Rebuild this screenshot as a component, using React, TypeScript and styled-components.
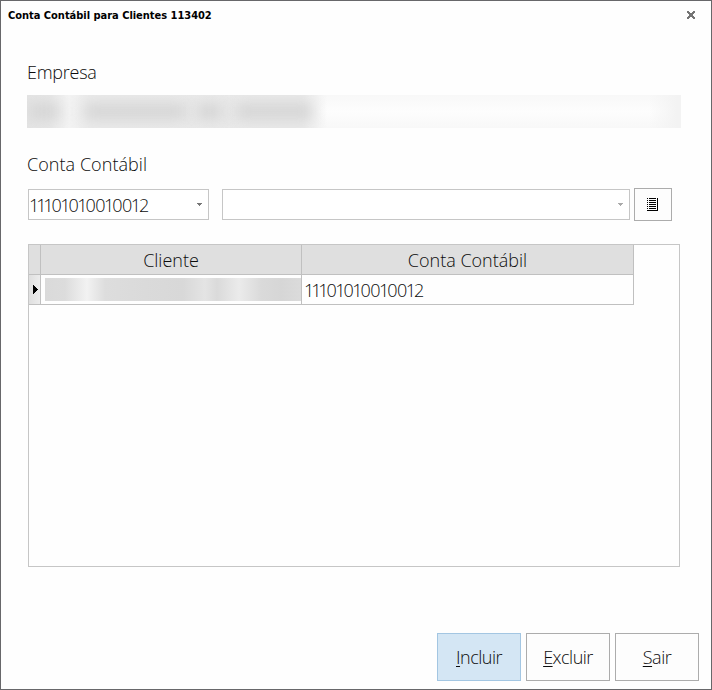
import React from "react";
import styled, { createGlobalStyle } from "styled-components";

const GlobalStyle = createGlobalStyle`
  * { box-sizing: border-box; }
  body { margin: 0; background: #fefefe; }
  button { padding: 0; margin: 0; font: inherit; color: inherit; }
`;

const Dialog = styled.div`
  width: 712px;
  height: 690px;
  border: 1px solid #67676a;
  background: #fefefe;
  color: #0c0c0c;
  font: 300 18px/24px "Open Sans", "Noto Sans", sans-serif;
  display: flex;
  flex-direction: column;
`;

const TitleBar = styled.header`
  display: flex;
  justify-content: space-between;
  align-items: center;
  height: 28px;
  padding: 0 16px 0 7px;
`;

const Title = styled.h1`
  margin: 0;
  padding-top: 2px;
  color: #000;
  font: bold 11px/14px "DejaVu Sans Condensed", "DejaVu Sans", sans-serif;
  font-stretch: condensed;
  letter-spacing: -0.02px;
  white-space: nowrap;
`;

const CloseButton = styled.button`
  display: flex;
  border: 0;
  background: none;
`;

const Form = styled.main`
  display: flex;
  flex-direction: column;
  padding: 31px 30px 0 26px;
`;

const Label = styled.label<{ $spacing?: number }>`
  height: 24px;
  white-space: nowrap;
  letter-spacing: ${(p) => p.$spacing ?? 0}px;
`;

const Redacted = styled.div`
  overflow: hidden;
  display: flex;
  align-items: center;
  flex: none;
`;

const CompanyField = styled(Redacted)`
  width: 654px;
  height: 33px;
  margin: 11px 0 24px;
  background:
    linear-gradient(90deg, transparent 622px, #f3f3f3 650px),
    linear-gradient(90deg, #e4e4e4, #e6e6e6 22px, #f3f3f3 42px, #eaeaea 62px, #e9e9e9 276px, transparent 300px),
    linear-gradient(#f8f8f8, #fdfdfd 50%, #f8f8f8);
`;

const ClientMask = styled(Redacted)`
  width: 256px;
  height: 23px;
  margin: 3px 0 0 4px;
  background: linear-gradient(
    90deg,
    #dadada,
    #dcdcdc 20px,
    #f2f2f2 42px,
    #dddddd 60px,
    #dadada 100px,
    #d8d8d8 138px,
    #e4e4e4 160px,
    #dadada 172px,
    #ebebeb 194px,
    #dadada 216px,
    #d6d6d6 236px,
    #dbdbdb
  );
`;

const Smudge = styled.span<{ $w: number; $gap: number }>`
  width: ${(p) => p.$w}px;
  height: 15px;
  margin-left: ${(p) => p.$gap}px;
  background: #d4d4d4;
  filter: blur(7px);
  flex: none;
`;

const Selectors = styled.div`
  display: flex;
  align-items: center;
  height: 33px;
  margin: 12px 0 23px 1px;
`;

const Combo = styled.div<{ $w: number; $after: number }>`
  display: flex;
  align-items: center;
  justify-content: space-between;
  width: ${(p) => p.$w}px;
  height: 31px;
  margin-right: ${(p) => p.$after}px;
  padding: 0 6px 0 1px;
  border: 1px solid #c6c6c6;
  background: #fff;
`;

const Code = styled.span`
  letter-spacing: -0.5px;
  white-space: nowrap;
`;

const Ones = styled.span`
  position: relative;
  left: -1px;
  letter-spacing: -3.1px;
`;

const ListButton = styled.button`
  display: flex;
  align-items: center;
  justify-content: center;
  width: 38px;
  height: 33px;
  padding-right: 1px;
  border: 1px solid #acacac;
  background: #fdfdfd;
`;

const Grid = styled.section`
  width: 652px;
  height: 323px;
  margin-left: 1px;
  border: 1px solid #c6c6c6;
`;

const GridRow = styled.div<{ $head?: boolean }>`
  display: grid;
  grid-template-columns: 12px 261px 332px;
  width: 605px;
  height: 30px;
  background: ${(p) => (p.$head ? "#dfdfdf" : "#fefefe")};
  text-align: ${(p) => (p.$head ? "center" : "left")};
`;

const Cell = styled.div<{ $pad?: number }>`
  overflow: hidden;
  border-right: 1px solid #c0c0c0;
  border-bottom: 1px solid #c0c0c0;
  padding-left: ${(p) => p.$pad ?? 0}px;
  line-height: 31px;
  white-space: nowrap;
`;

const MarkerCell = styled(Cell)`
  display: flex;
  align-items: center;
  background: linear-gradient(90deg, #dfdfdf, #ececec);
`;

const Actions = styled.footer`
  display: flex;
  justify-content: flex-end;
  gap: 5px;
  margin: auto 12px 8px 0;
`;

const ActionButton = styled.button<{ $primary?: boolean }>`
  width: 84px;
  height: 48px;
  border: 1px solid ${(p) => (p.$primary ? "#a3c6e2" : "#acacac")};
  background: ${(p) => (p.$primary ? "#d4e6f4" : "#fdfdfd")};
  letter-spacing: -0.5px;
`;

const Key = styled.span`
  text-decoration: underline;
  text-decoration-thickness: 1px;
  text-underline-offset: 2px;
`;

const Arrow = ({ color }: { color: string }) => (
  <svg width="5" height="3" viewBox="0 0 5 3" shapeRendering="crispEdges" fill={color}>
    <path d="M0 0H5V1H4V2H3V3H2V2H1V1H0Z" />
  </svg>
);

const CloseIcon = () => (
  <svg width="8" height="8" viewBox="0 0 8 8" shapeRendering="crispEdges" fill="#747474">
    <path d="M0 0H2V1H3V2H5V1H6V0H8V2H7V3H6V5H7V6H8V8H6V7H5V6H3V7H2V8H0V6H1V5H2V3H1V2H0Z" />
  </svg>
);

const ListIcon = () => (
  <svg width="11" height="13" viewBox="0 0 11 13" shapeRendering="crispEdges" fill="#000">
    <path d="M0 0h1v1H0zM2 0h7v1H2zM0 2h1v1H0zM2 2h7v1H2zM0 4h1v1H0zM2 4h7v1H2zM0 6h1v1H0zM2 6h7v1H2zM0 8h1v1H0zM2 8h7v1H2zM0 10h1v1H0zM2 10h7v1H2zM10 0h1v13H0v-1h10z" />
  </svg>
);

const RowMarker = () => (
  <svg width="5" height="9" viewBox="0 0 5 9" shapeRendering="crispEdges">
    <path d="M0 0H1V1H2V2H3V3H4V4H5V5H4V6H3V7H2V8H1V9H0Z" />
  </svg>
);

/* Account codes use proportional figures: each run of 1s is set tighter. */
const AccountCode = ({ value }: { value: string }) => (
  <Code>
    {value.split(/(1+)/).map((run, i) => (run.startsWith("1") ? <Ones key={i}>{run}</Ones> : run))}
  </Code>
);

export default function App() {
  return (
    <>
      <GlobalStyle />
      <Dialog>
        <TitleBar>
          <Title>Conta Contábil para Clientes 113402</Title>
          <CloseButton aria-label="Fechar"><CloseIcon /></CloseButton>
        </TitleBar>
        <Form>
          <Label $spacing={-0.25}>Empresa</Label>
          <CompanyField>
            <Smudge $w={30} $gap={2} />
            <Smudge $w={101} $gap={26} />
            <Smudge $w={25} $gap={11} />
            <Smudge $w={76} $gap={14} />
          </CompanyField>
          <Label $spacing={0.05}>Conta Contábil</Label>
          <Selectors>
            <Combo $w={181} $after={13}>
              <AccountCode value="11101010010012" />
              <Arrow color="#777" />
            </Combo>
            <Combo $w={408} $after={4}>
              <span />
              <Arrow color="#aaa" />
            </Combo>
            <ListButton aria-label="Lista"><ListIcon /></ListButton>
          </Selectors>
          <Grid>
            <GridRow $head>
              <Cell />
              <Cell>Cliente</Cell>
              <Cell>Conta Contábil</Cell>
            </GridRow>
            <GridRow>
              <MarkerCell $pad={4}><RowMarker /></MarkerCell>
              <Cell><ClientMask /></Cell>
              <Cell $pad={3}><AccountCode value="11101010010012" /></Cell>
            </GridRow>
          </Grid>
        </Form>
        <Actions>
          <ActionButton $primary><Key>I</Key>ncluir</ActionButton>
          <ActionButton><Key>E</Key>xcluir</ActionButton>
          <ActionButton><Key>S</Key>air</ActionButton>
        </Actions>
      </Dialog>
    </>
  );
}
